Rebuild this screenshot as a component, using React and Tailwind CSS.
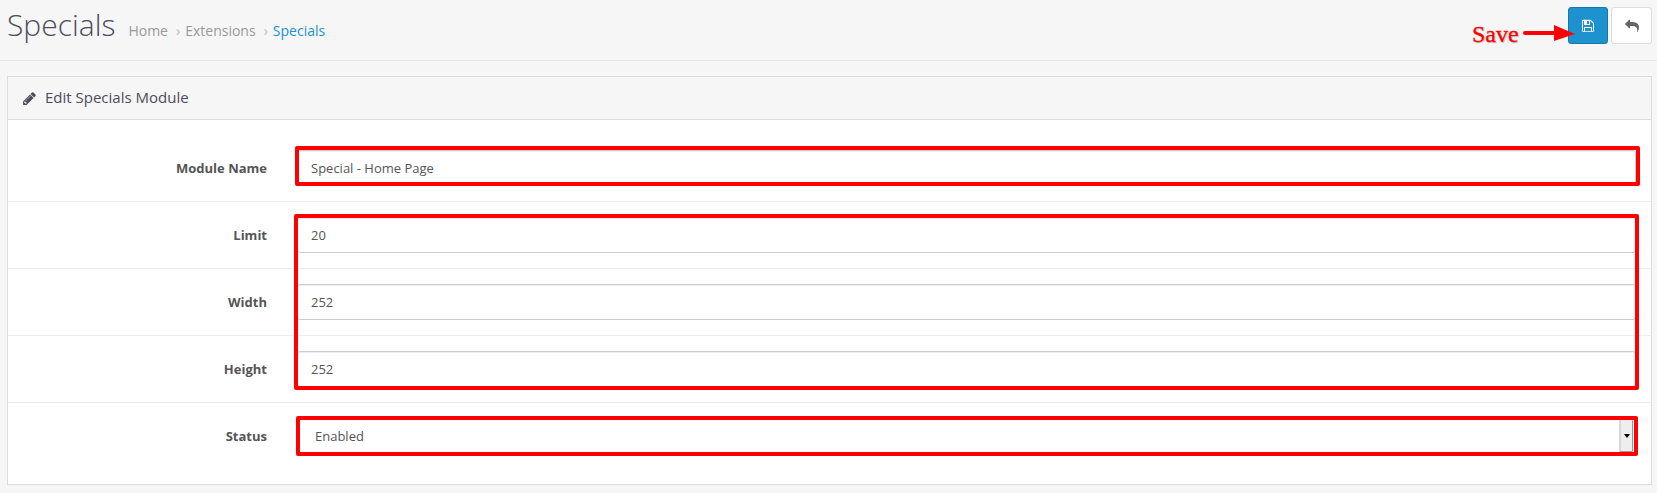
const highlight = 'pointer-events-none absolute rounded-[2px] border-4 border-[#ff0000]';

function Icon({ d, className }) {
  return (
    <svg viewBox="0 0 1792 1792" fill="currentColor" className={className} aria-hidden="true">
      <path d={d} />
    </svg>
  );
}

const PENCIL =
  'M491 1536l91-91-235-235-91 91v107h128v128h107zM1014 608q0-22-22-22-10 0-17 7l-542 542q-7 7-7 17 0 22 22 22 10 0 17-7l542-542q7-7 7-17zM960 416l416 416-832 832h-416v-416zM1643 512q0 53-37 90l-166 166-416-416 166-165q36-38 90-38 53 0 91 38l235 234q37 39 37 91z';
const FLOPPY =
  'M512 1536h768v-384h-768v384zm896 0h128v-896q0-14-10-38.5t-20-34.5l-281-281q-10-10-34-20t-39-10v416q0 40-28 68t-68 28h-576q-40 0-68-28t-28-68v-416h-128v1280h128v-416q0-40 28-68t68-28h832q40 0 68 28t28 68v416zm-384-928v-320q0-13-9.5-22.5t-22.5-9.5h-192q-13 0-22.5 9.5t-9.5 22.5v320q0 13 9.5 22.5t22.5 9.5h192q13 0 22.5-9.5t9.5-22.5zm640 32v896q0 40-28 68t-68 28h-1344q-40 0-68-28t-28-68v-1344q0-40 28-68t68-28h928q40 0 88 20t76 48l280 280q28 28 48 76t20 88z';
const REPLY =
  'M1792 1120q0 166-127 451-3 7-10.5 24t-13.5 30-13 22q-12 17-28 17-15 0-23.5-10t-8.5-25q0-9 2.5-26.5t2.5-23.5q5-68 5-123C1576 1010 1300 896 864 896h-224v256q0 26-19 45t-45 19-45-19l-512-512q-19-19-19-45t19-45l512-512q19-19 45-19t45 19 19 45v256h224q713 0 875 403 53 134 53 333z';

function Row({ label, first, children }) {
  return (
    <div className={first ? 'flex py-[15px]' : 'flex border-t border-[#ededed] py-[15px]'}>
      <label className="w-[259px] shrink-0 pt-[9px] text-right text-[13px] leading-[19px] font-bold text-[#555]">
        {label}
      </label>
      <div className="ml-[30px] mr-[15px] h-9 flex-1">{children}</div>
    </div>
  );
}

function TextField({ value }) {
  return (
    <input
      defaultValue={value}
      className="block h-9 w-full rounded-[3px] border border-[#ccc] bg-white px-[13px] text-[13px] text-[#555] shadow-[inset_0_1px_1px_rgba(0,0,0,0.075)] outline-none"
    />
  );
}

export default function App() {
  return (
    <div className="relative h-[493px] w-[1657px] overflow-hidden bg-[#f6f6f6] font-['Open_Sans',sans-serif]">
      <header className="flex h-[61px] items-start border-b border-[#e7e7e7] pl-[7px] pr-[5px]">
        <h1 className="mt-[6px] text-[30px] leading-[38px] font-light text-[#4c4d5a]">Specials</h1>
        <nav className="ml-[13px] mt-[21px] flex text-[14px] leading-[20px] text-[#999]">
          <span>Home</span>
          <span className="ml-[8px] mr-[5px] text-[#bbb]">›</span>
          <span>Extensions</span>
          <span className="ml-[8px] mr-[5px] text-[#bbb]">›</span>
          <span className="text-[#1e91cf]">Specials</span>
        </nav>
        <div className="ml-auto mt-[7px] flex gap-[3px]">
          <button className="flex h-[37px] w-10 items-center justify-center rounded-[3px] border border-[#1978ab] bg-[#1e91cf] text-white">
            <Icon d={FLOPPY} className="size-[14px]" />
          </button>
          <button className="flex h-[37px] w-[41px] items-center justify-center rounded-[3px] border border-[#ddd] bg-white text-[#666]">
            <Icon d={REPLY} className="size-[14px]" />
          </button>
        </div>
      </header>

      <main className="ml-[7px] mt-[15px] w-[1645px] border border-[#dcdcdc] bg-white">
        <div className="flex h-[43px] items-center border-b border-[#dcdcdc] bg-[#f6f6f6] pl-[14px] text-[#4c4d5a]">
          <Icon d={PENCIL} className="size-[15px]" />
          <h2 className="ml-[8px] pb-[2px] text-[15px] leading-[20px]">Edit Specials Module</h2>
        </div>
        <form className="py-[15px]">
          <Row label="Module Name" first>
            <TextField value="Special - Home Page" />
          </Row>
          <Row label="Limit">
            <TextField value="20" />
          </Row>
          <Row label="Width">
            <TextField value="252" />
          </Row>
          <Row label="Height">
            <TextField value="252" />
          </Row>
          <Row label="Status">
            <div className="flex h-9 items-center justify-between rounded-[3px] border border-[#ccc] pl-[17px] text-[13px] text-[#555]">
              <span className="pt-[2px]">Enabled</span>
              <span className="mr-[2px] flex h-8 w-[14px] items-center justify-center border-b border-l-2 border-r border-b-[#999] border-l-[#d8d8d8] border-r-[#999] bg-[#eee]">
                <span className="border-x-[3px] border-t-[4px] border-x-transparent border-t-black" />
              </span>
            </div>
          </Row>
        </form>
      </main>

      <div className={`${highlight} left-[295px] top-[146px] h-[40px] w-[1345px]`} />
      <div className={`${highlight} left-[294px] top-[214px] h-[176px] w-[1345px]`} />
      <div className={`${highlight} left-[296px] top-[416px] h-[40px] w-[1342px]`} />
      <span className="absolute left-[1472px] top-[20px] font-['Liberation_Serif',serif] text-[24px] leading-[28px] text-[#ff0000] [text-shadow:1px_1px_1px_rgba(0,0,0,0.25)] [-webkit-text-stroke:0.3px_#ff0000]">
        Save
      </span>
      <svg className="absolute left-[1523px] top-[24px] h-[18px] w-[52px]" viewBox="0 0 52 18" fill="#ff0000">
        <path d="M2 9H33" stroke="#ff0000" strokeWidth="4" strokeLinecap="round" />
        <path d="M31 1L52 10L31 17Z" />
      </svg>
    </div>
  );
}
